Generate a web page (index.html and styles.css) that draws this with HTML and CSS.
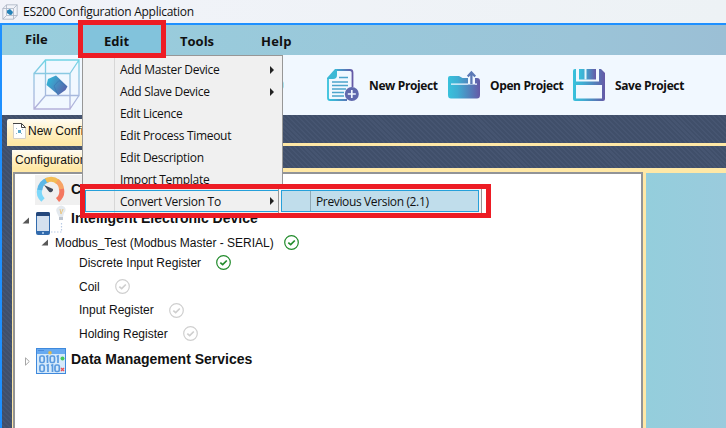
FILE: index.html
```html
<!DOCTYPE html>
<html lang="en">
<head>
<meta charset="utf-8">
<title>ES200 Configuration Application</title>
<link rel="stylesheet" href="styles.css">
</head>
<body>
<svg width="0" height="0" class="defs">
  <defs>
    <linearGradient id="g" x1="0" y1="0" x2="1" y2="0"><stop offset="0" stop-color="#38c2dc"/><stop offset=".3" stop-color="#3faed3"/><stop offset=".65" stop-color="#5184bd"/><stop offset="1" stop-color="#6659a6"/></linearGradient>
    <linearGradient id="v" x1="0" y1="0" x2="0" y2="50" gradientUnits="userSpaceOnUse"><stop offset="0" stop-color="#6fd5e5"/><stop offset=".5" stop-color="#9cc0e0"/><stop offset="1" stop-color="#b4b0da"/></linearGradient>
    <linearGradient id="c" x1="0" y1="0" x2="1" y2=".5"><stop offset="0" stop-color="#2ec0dc"/><stop offset="1" stop-color="#5767ad"/></linearGradient>
    <symbol id="cube" viewBox="0 0 48 52">
      <path d="M12.500 1H46V36.500H12.500ZM1 14.500H37V50H1ZM1 14.500L12.500 1M37 14.500L46 1M1 50L12.500 36.500M37 50L46 36.500" fill="none" stroke="url(#v)" stroke-width="1.300"/>
      <path d="M15 20L23 16.500L34.500 27.500L32.500 31L25.500 36L13.500 26Z" fill="url(#c)"/>
      <path d="M25 36L21 27L26 21.500L34 28" fill="none" stroke="#3977b3" stroke-width=".7"/>
    </symbol>
    <symbol id="ok" viewBox="0 0 15 15"><circle cx="7.500" cy="7.500" r="6.800" fill="none" stroke="currentColor" stroke-width="1.200"/><path d="M4.300 7.600L6.700 9.700L10.800 5.500" fill="none" stroke="currentColor" stroke-width="1.700"/></symbol>
  </defs>
</svg>
<div class="app">
  <header class="titlebar"><svg class="logo-sm" viewBox="0 0 16 16"><path d="M4.500.8H15.200V11.500H4.500ZM.8 4.500H11.500V15.200H.8ZM.8 4.500L4.500.8M11.500 4.500L15.200.8M.8 15.200L4.500 11.500M11.500 15.200L15.200 11.500" fill="none" stroke="#a9b3c1" stroke-width=".8"/><path d="M5 6.500L8 5L11 8L10 10.500L8 11L5 9Z" fill="#2583b8"/></svg><span class="title">ES200 Configuration Application</span></header>
  <nav class="menubar">
    <span class="file">File</span><span class="edit">Edit</span><span class="tools">Tools</span><span class="help">Help</span>
  </nav>
  <div class="toolbar">
    <svg class="logo"><use href="#cube"/></svg>
    <button class="tool new">
      <svg viewBox="0 0 32 32"><path d="M8 1H23Q25.500 1 25.500 3.500V18M20 31H3Q1 31 1 29V9" fill="none" stroke="url(#g)" stroke-width="1.800"/><path d="M0 9L8 0H10V6Q10 10 6 10H0Z" fill="#3bb8d5"/><path d="M12 8.500H21M5 13H21M5 16.500H21M5 20H19M5 23.500H17M5 27H17" fill="none" stroke="#4ca4cc" stroke-width="1.500"/><circle cx="24.800" cy="25" r="7" fill="#6069ad"/><path d="M24.800 21V29M20.800 25H28.800" stroke="#f1f8ff" stroke-width="1.700"/></svg>
      <span>New Project</span>
    </button>
    <button class="tool open">
      <svg viewBox="0 0 32 32"><path d="M0 27V9Q0 7 2 7H11L14.500 9H29Q32 9 32 12V26Q32 29.500 29 29.500H3Q0 29.500 0 26Z" fill="url(#g)"/><path d="M3 15.200H20M27 15.200H29" stroke="#f1f8ff" stroke-width="1.200"/><path d="M20 15.500V8.500H27V15.500Z" fill="#f1f8ff"/><path d="M23.400 15V4M19.700 7.500L23.400 3.500L27.200 7.500" fill="none" stroke="#5c79b6" stroke-width="2.300"/></svg>
      <span>Open Project</span>
    </button>
    <button class="tool save">
      <svg viewBox="0 0 32 32"><path d="M2 0H28L32 4V30Q32 32 30 32H2Q0 32 0 30V2Q0 0 2 0Z" fill="url(#g)"/><path d="M3 0H26V12.500H3Z" fill="#f1f8ff"/><path d="M6 0H23V10.500H6Z" fill="url(#g)"/><path d="M3 16H29V29.500H3Z" fill="#f1f8ff"/><path d="M12.500 0V10.500" stroke="#e7f6fd" stroke-width="2"/></svg>
      <span>Save Project</span>
    </button>
  </div>
  <main class="workspace">
    <div class="doc-tab">
      <svg width="14" height="16" viewBox="0 0 14 16"><path d="M.5.5H9L12.500 4.500V15.500H.5Z" fill="#fff" stroke="#d4d0c8"/><path d="M0 .5H8.500V4.500H12.500M8.500.5L12.500 4.500" fill="none" stroke="#444"/><path d="M5 7H8V10H5Z" fill="#58a9cd"/><path d="M3 5H4V6H3ZM9 6H10V7H9ZM8 10H9V11H8ZM3 10H4V11H3Z" fill="#9ab8c9"/></svg>
      <span>New Config</span>
    </div>
    <div class="doc-line"></div>
    <div class="panel-tab">Configuration</div>
    <div class="panes">
      <section class="tree">
        <div class="row head r1">
          <svg width="30" height="30" viewBox="0 0 30 30"><g fill="none" stroke-width="5"><path d="M8 25A11 11 0 0 1 4.700 14" stroke="#7dd8fa"/><path d="M4.800 15A11 11 0 0 1 13 5" stroke="#5bb7e6"/><path d="M11 5.500A11 11 0 0 1 23 7" stroke="#f3bd55"/><path d="M22 6A11 11 0 0 1 26.500 15" stroke="#f7a365"/><path d="M26.500 14A11 11 0 0 1 22.500 25" stroke="#f47760"/></g><path d="M9 10L18 14A2.500 2.500 0 0 1 13.500 16Z" fill="#3f4858"/></svg>
          <b>C</b>
        </div>
        <div class="row head r2">
          <svg class="arrow" viewBox="0 0 7 7"><path d="M7 .5V6.500H.5Z" fill="#595959"/></svg>
          <svg width="30" height="31" viewBox="0 0 30 31"><rect x="0" y="7" width="14" height="23" rx="2" fill="#326bad"/><path d="M0 11V9Q0 7 2 7H12Q14 7 14 9V11Z" fill="#25477b"/><path d="M1 11H13V26H1Z" fill="#d4e0ee"/><circle cx="7" cy="28" r="1" fill="#bcd9f4"/><path d="M21 8Q19 4 22 2Q25-1 28.500 2Q31 5 28 8L27 12H23Z" fill="#e4e9ee"/><path d="M24 4L25 9L27 4" fill="none" stroke="#e9c786"/><path d="M23 12H27V15H23Z" fill="#bdc5cf"/><path d="M15 27H25.500V17" fill="none" stroke="#bacbe5" stroke-width="1.200" stroke-dasharray="1.500 1.500"/></svg>
          <b>Intelligent Electronic Device</b>
        </div>
        <div class="row r3"><svg class="arrow" viewBox="0 0 7 7"><path d="M7 .5V6.500H.5Z" fill="#595959"/></svg><span>Modbus_Test (Modbus Master - SERIAL)</span><svg class="mark on"><use href="#ok"/></svg></div>
        <div class="row leaf r4"><span>Discrete Input Register</span><svg class="mark on"><use href="#ok"/></svg></div>
        <div class="row leaf"><span>Coil</span><svg class="mark"><use href="#ok"/></svg></div>
        <div class="row leaf"><span>Input Register</span><svg class="mark"><use href="#ok"/></svg></div>
        <div class="row leaf"><span>Holding Register</span><svg class="mark"><use href="#ok"/></svg></div>
        <div class="row head r8">
          <svg class="closed" viewBox="0 0 5 9"><path d="M.5 .8L4.300 4.500L.5 8.200Z" fill="#fff" stroke="#a6a6a6"/></svg>
          <svg width="30" height="26" viewBox="0 0 30 26"><rect x=".5" y=".5" width="29" height="25" fill="#d6eafb" stroke="#3f89dc"/><path d="M1 1H29V6H1Z" fill="#67aaf1"/><path d="M2.500 2.500H8" stroke="#2d6dc4" stroke-dasharray="1 1"/><circle cx="14" cy="4.800" r="1.800" fill="#dfb94d"/><g fill="none" stroke="#5a9adf" stroke-width="1.700"><rect x="3.900" y="8" width="4.300" height="6.500" rx="1.500"/><path d="M10 8.500L11.500 8V15"/><rect x="14.200" y="8" width="4.300" height="6.500" rx="1.500"/><path d="M20.500 8.500L22 8V15"/><rect x="3.900" y="17" width="4.300" height="6.500" rx="1.500"/><path d="M10.500 17.500L12 17V24M15 17.500L16.500 17V24"/><rect x="19" y="17" width="4.300" height="6.500" rx="1.500"/></g><circle cx="26.500" cy="10.500" r="2" fill="#44c85d"/><path d="M25 20L28 23M28 20L25 23" stroke="#ec4f56" stroke-width="1.400"/></svg>
          <b>Data Management Services</b>
        </div>
      </section>
      <section class="canvas"></section>
    </div>
  </main>
</div>
<div class="menu">
  <div class="item"><span>Add Master Device</span><i></i></div>
  <div class="item"><span>Add Slave Device</span><i></i></div>
  <div class="item"><span>Edit Licence</span></div>
  <div class="item"><span>Edit Process Timeout</span></div>
  <div class="item"><span>Edit Description</span></div>
  <div class="item"><span>Import Template</span></div>
  <div class="item selected"><span>Convert Version To</span><i></i></div>
</div>
<div class="submenu"><div class="subitem"><span>Previous Version (2.1)</span></div></div>
<div class="callout callout-edit"></div>
<div class="callout callout-convert"></div>
</body>
</html>
```
FILE: styles.css
```css
* { box-sizing: border-box; }
body { margin: 0; width: 726px; height: 428px; overflow: hidden; font-family: "Liberation Sans", Arial, sans-serif; font-size: 12px; color: #111; }
svg { display: block; flex: none; }
.defs { position: absolute; }
.app { height: 428px; display: flex; flex-direction: column; }
.titlebar { height: 23px; flex: none; display: flex; align-items: center; padding-left: 2px; background: linear-gradient(90deg, #f1f3f9, #edf2f5); font-family: "Open Sans", "Noto Sans", sans-serif; }
.logo-sm { width: 16px; height: 16px; margin-right: 5px; }
.title { letter-spacing: -.27px; white-space: nowrap; }
.menubar { height: 32px; flex: none; display: flex; align-items: center; border-top: 2px solid #1e90ff; border-left: 2px solid #1e90ff; background: linear-gradient(90deg, #98cedd, #9bc4d8 80%, #9bbfd5); font: bold 13px "Open Sans", "Noto Sans", sans-serif; }
.menubar span { height: 30px; line-height: 32px; white-space: nowrap; }
.menubar .file { width: 80px; padding-left: 23px; line-height: 29px; }
.menubar .edit { width: 80px; padding-left: 22px; background: #82c3dc; }
.menubar .tools { width: 82px; padding-left: 18px; }
.menubar .help { padding-left: 17px; letter-spacing: .2px; }
.toolbar { height: 60px; flex: none; display: flex; align-items: center; border-left: 2px solid #1e90ff; background: radial-gradient(ellipse 1.5px 4px at 281px 30px, #a9e3f0 60%, transparent) #f1f8ff; }
.logo { width: 48px; height: 52px; margin-left: 31px; }
.tool { display: flex; align-items: center; padding: 0; border: 0; background: none; color: #111; font: bold 12px "Open Sans", "Noto Sans", sans-serif; white-space: nowrap; }
.tool svg { width: 32px; height: 32px; }
.new { margin-left: 246px; width: 121px; gap: 10px; }
.open { width: 125px; gap: 10px; }
.save { gap: 10px; }
.tool span { letter-spacing: -.37px; }
.workspace { flex: 1; min-height: 0; display: flex; flex-direction: column; border-left: 2px solid #1e90ff; padding: 4px 0 0 5px; background: repeating-linear-gradient(45deg, #404f6a 0 2px, #465571 2px 3.500px); }
.doc-tab { width: 110px; height: 24px; display: flex; align-items: center; gap: 1px; padding-left: 6px; flex: none; background: linear-gradient(#fffcf3, #fff1c7 50%, #ffe8a6); border-radius: 2px 0 0; white-space: nowrap; }
.doc-line { height: 3px; flex: none; background: #ffe8a6; }
.panel-tab { width: 100px; height: 18px; flex: none; margin: 4px 0 0 5px; padding: 0 3px; line-height: 20px; background: linear-gradient(#fffcf3, #ffe8a6); }
.panes { flex: 1; min-height: 0; display: grid; grid-template-columns: 630px 1fr; column-gap: 3px; margin-left: 5px; padding: 4px 0 0 1px; background: #ffe8a6; }
.tree { background: #fff; border: 2px solid #929497; border-bottom: 0; }
.canvas { margin-top: 1px; background: linear-gradient(90deg, #94cedc, #9acbdd); }
.row { height: 23.700px; display: flex; align-items: center; white-space: nowrap; }
.head { font-size: 14px; }
.head b { letter-spacing: 0; margin-left: 5px; }
.r1 { height: 30px; width: 80px; margin: 1px 0 0 20px; background: #f0f0f0; }
.r1 b { margin: -3px 0 0 6px; }
.r2 { height: 31px; padding-left: 7px; }
.r2 b { margin-top: -6px; }
.arrow { width: 7px; height: 7px; margin-right: 7px; }
.r3 { height: 15px; margin-top: -1px; padding-left: 26px; }
.leaf { padding-left: 64px; }
.mark { width: 15px; height: 15px; color: #cfcfcf; margin-left: 15px; }
.mark.on { color: #218b2b; }
.r3 .mark { margin-left: 10px; }
.r4 { margin-top: 1px; }
.r8 { height: 27px; margin-top: 2px; padding-left: 10px; }
.r8 b { margin-top: -5px; }
.closed { width: 5px; height: 9px; margin-right: 6px; }
.menu { position: absolute; left: 82px; top: 55px; width: 201px; height: 160px; padding: 3px 2px; border: 1px solid #979797; background: linear-gradient(90deg, transparent 31px, #d7d7d7 31px 32px, transparent 32px) #f0f0f0; font: 12px "Open Sans", "Noto Sans", sans-serif; letter-spacing: -.3px; }
.item { height: 22px; display: flex; align-items: center; justify-content: space-between; padding: 0 7px 0 35px; white-space: nowrap; }
.item span { margin-top: -1px; }
.item i { border: 4px solid transparent; border-left-color: #222; border-right: 0; margin-right: -1px; margin-top: -1px; }
.item.selected { margin: -1px 1px 0 0; padding: 0 5px 0 34px; border: 1px solid #26a0da; }
.item.selected span { margin-top: 0; }
.submenu { position: absolute; left: 278px; top: 187px; width: 204px; height: 28px; padding: 2px 2px; border: 1px solid #979797; background: #f4f4f4; font: 12px "Open Sans", "Noto Sans", sans-serif; letter-spacing: -.36px; }
.subitem { width: 198px; height: 22px; padding-left: 34px; line-height: 22px; border: 1px solid #26a0da; background: linear-gradient(90deg, transparent 28px, #8fa9b5 28px 29px, transparent 29px) #c0ddeb; white-space: nowrap; }
.callout { position: absolute; border: 5px solid #ed1c24; }
.callout-edit { left: 78px; top: 20px; width: 88px; height: 38px; }
.callout-convert { left: 80px; top: 184px; width: 411px; height: 34px; }
```
